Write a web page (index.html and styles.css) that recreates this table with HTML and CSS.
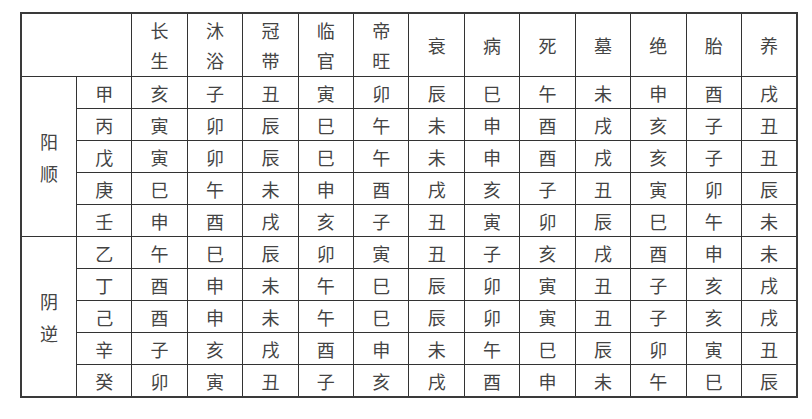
FILE: index.html
```html
<!DOCTYPE html>
<html lang="zh-CN">
<head>
<meta charset="utf-8">
<title>十二长生表</title>
<link rel="stylesheet" href="styles.css">
</head>
<body>
<table class="grid">
  <colgroup>
    <col span="14" class="col">
  </colgroup>
  <thead>
    <tr class="head">
      <th colspan="2"></th>
      <th>长<br>生</th><th>沐<br>浴</th><th>冠<br>带</th><th>临<br>官</th><th>帝<br>旺</th>
      <th>衰</th><th>病</th><th>死</th><th>墓</th><th>绝</th><th>胎</th><th>养</th>
    </tr>
  </thead>
  <tbody>
    <tr><td rowspan="5" class="group">阳<br>顺</td><td>甲</td><td>亥</td><td>子</td><td>丑</td><td>寅</td><td>卯</td><td>辰</td><td>巳</td><td>午</td><td>未</td><td>申</td><td>酉</td><td>戌</td></tr>
    <tr><td>丙</td><td>寅</td><td>卯</td><td>辰</td><td>巳</td><td>午</td><td>未</td><td>申</td><td>酉</td><td>戌</td><td>亥</td><td>子</td><td>丑</td></tr>
    <tr><td>戊</td><td>寅</td><td>卯</td><td>辰</td><td>巳</td><td>午</td><td>未</td><td>申</td><td>酉</td><td>戌</td><td>亥</td><td>子</td><td>丑</td></tr>
    <tr><td>庚</td><td>巳</td><td>午</td><td>未</td><td>申</td><td>酉</td><td>戌</td><td>亥</td><td>子</td><td>丑</td><td>寅</td><td>卯</td><td>辰</td></tr>
    <tr><td>壬</td><td>申</td><td>酉</td><td>戌</td><td>亥</td><td>子</td><td>丑</td><td>寅</td><td>卯</td><td>辰</td><td>巳</td><td>午</td><td>未</td></tr>
    <tr class="split"><td rowspan="5" class="group">阴<br>逆</td><td>乙</td><td>午</td><td>巳</td><td>辰</td><td>卯</td><td>寅</td><td>丑</td><td>子</td><td>亥</td><td>戌</td><td>酉</td><td>申</td><td>未</td></tr>
    <tr><td>丁</td><td>酉</td><td>申</td><td>未</td><td>午</td><td>巳</td><td>辰</td><td>卯</td><td>寅</td><td>丑</td><td>子</td><td>亥</td><td>戌</td></tr>
    <tr><td>己</td><td>酉</td><td>申</td><td>未</td><td>午</td><td>巳</td><td>辰</td><td>卯</td><td>寅</td><td>丑</td><td>子</td><td>亥</td><td>戌</td></tr>
    <tr><td>辛</td><td>子</td><td>亥</td><td>戌</td><td>酉</td><td>申</td><td>未</td><td>午</td><td>巳</td><td>辰</td><td>卯</td><td>寅</td><td>丑</td></tr>
    <tr><td>癸</td><td>卯</td><td>寅</td><td>丑</td><td>子</td><td>亥</td><td>戌</td><td>酉</td><td>申</td><td>未</td><td>午</td><td>巳</td><td>辰</td></tr>
  </tbody>
</table>
</body>
</html>
```

FILE: styles.css
```css
html, body {
  margin: 0;
  padding: 0;
  background: #ffffff;
}

body {
  padding: 12px 0 0 20px;
  font-family: "Noto Sans CJK SC", "Noto Sans CJK JP", sans-serif;
  color: #444444;
}

.grid {
  width: 778px;
  table-layout: fixed;
  border-collapse: collapse;
  border: 2px solid #3a3a3a;
}

.grid th,
.grid td {
  border: 1px solid #333333;
  padding: 0;
  text-align: center;
  vertical-align: middle;
  font-size: 18px;
  font-weight: 400;
  line-height: 30px;
}

.head th {
  height: 62px;
}

.grid tbody td {
  height: 31px;
  line-height: 24px;
}

.grid td.group {
  line-height: 32px;
}
```
